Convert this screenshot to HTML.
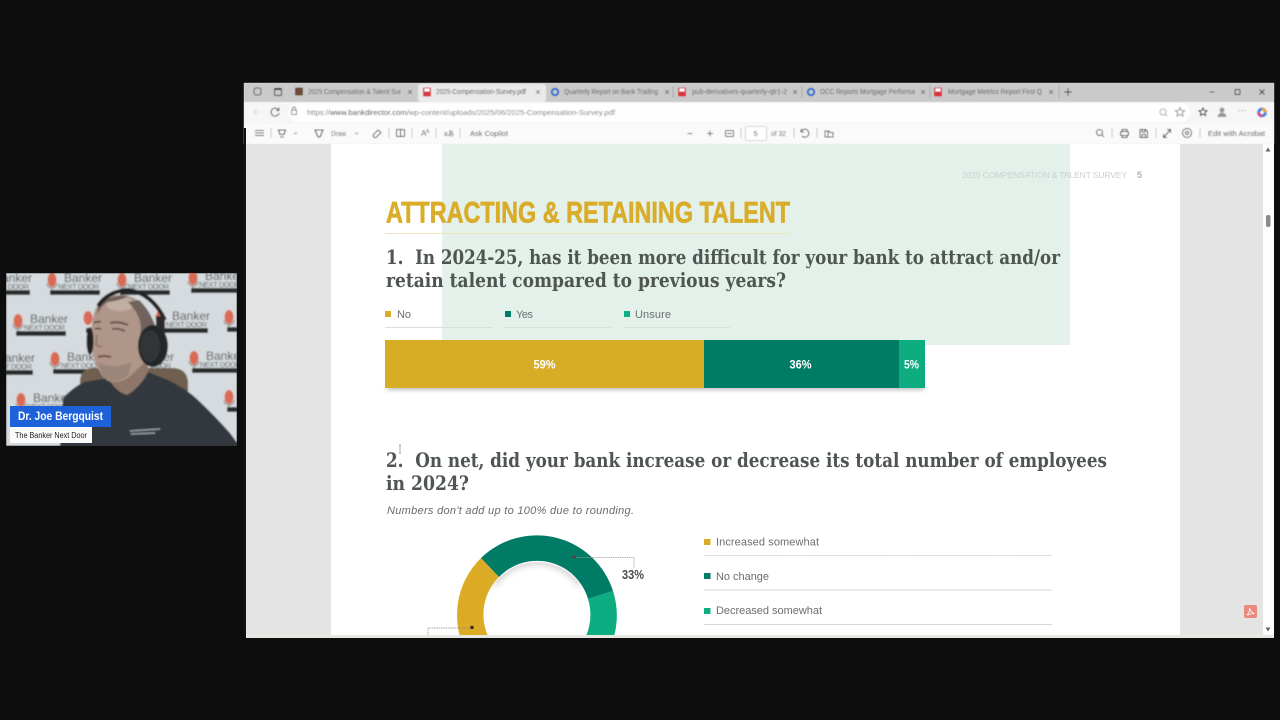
<!DOCTYPE html>
<html><head><meta charset="utf-8"><title>2025 Compensation Survey</title>
<style>
html,body{margin:0;padding:0;background:#0d0d0d;width:1280px;height:720px;overflow:hidden}
svg{display:block}
text{font-family:"Liberation Sans",sans-serif}
.ui{font-size:7.5px;fill:#5a5a5a}
.ic{fill:none;stroke:#555;stroke-width:1}
.sep{stroke:#c8c8c8;stroke-width:1}
.x{font-size:9px;fill:#444;text-anchor:middle}
text.q{font-family:"DejaVu Serif","Liberation Serif",serif;font-weight:bold;font-size:20px;fill:#4f5451}
.lg{font-size:11px;fill:#6e6e6e}
.pc{font-weight:bold;font-size:12px;fill:#fff;text-anchor:middle}
.bk{font-size:12px;fill:#4a4d50}
.nd{font-size:7.5px;fill:#5a5d60}
</style></head><body>
<svg width="1280" height="720" viewBox="0 0 1280 720" xmlns="http://www.w3.org/2000/svg">
<defs>
<filter id="b1" x="-5%" y="-5%" width="110%" height="110%"><feGaussianBlur stdDeviation="0.35"/></filter>
<filter id="b0" x="-5%" y="-5%" width="110%" height="110%"><feGaussianBlur stdDeviation="0.5"/></filter>
<filter id="b2" x="-5%" y="-5%" width="110%" height="110%"><feGaussianBlur stdDeviation="0.8"/></filter>
<filter id="b3" x="-20%" y="-50%" width="140%" height="200%"><feGaussianBlur stdDeviation="2.2"/></filter>
<filter id="b4" x="-30%" y="-60%" width="160%" height="220%"><feGaussianBlur stdDeviation="3.5"/></filter>
<clipPath id="cam"><rect x="6" y="273" width="231" height="173"/></clipPath>
<clipPath id="pg"><rect x="331" y="144" width="849" height="491"/></clipPath>
<clipPath id="inner"><circle cx="537" cy="615" r="53"/></clipPath>
</defs>
<rect width="1280" height="720" fill="#0d0d0d"/>

<!-- browser window -->
<rect x="244" y="83" width="1030" height="555" fill="#e8e8e2"/>
<g filter="url(#b0)">
<rect x="244" y="83" width="1030" height="19" fill="#cacaca"/>
<rect x="418" y="84" width="128" height="18" rx="3" fill="#eaeaea"/>
<rect x="244" y="102" width="1030" height="22" fill="#f6f6f6"/>
<rect x="288" y="103" width="902" height="19" rx="9" fill="#fefefe"/>
<rect x="244" y="124" width="1030" height="20" fill="#fafafa"/>

<!-- tab strip -->
<rect class="ic" x="254" y="88" width="7" height="7" rx="2"/>
<rect x="274.500" y="88.500" width="7" height="7" rx="1" fill="none" stroke="#333"/><rect x="275" y="88" width="6" height="2" fill="#333"/>
<line class="sep" x1="290" y1="86" x2="290" y2="98" stroke="#999"/>
<rect x="295" y="87.500" width="8" height="8" rx="1" fill="#6e4a35"/>
<text class="ui" x="308" y="94" textLength="93" lengthAdjust="spacingAndGlyphs">2025 Compensation &amp; Talent Sur</text>
<text class="x" x="410" y="95">×</text>
<rect x="423" y="87.500" width="8" height="9" rx="1" fill="#d8343c"/><rect x="424.500" y="88.500" width="5" height="3" fill="#fff"/>
<text class="ui" x="436" y="94" textLength="90" lengthAdjust="spacingAndGlyphs" style="fill:#444">2025-Compensation-Survey.pdf</text>
<text class="x" x="538" y="95">×</text>
<circle cx="555" cy="92" r="3.200" fill="none" stroke="#1f6fd0" stroke-width="2"/>
<text class="ui" x="564" y="94" textLength="94" lengthAdjust="spacingAndGlyphs">Quarterly Report on Bank Trading</text>
<text class="x" x="667" y="95">×</text>
<line class="sep" x1="673" y1="86" x2="673" y2="98" style="stroke:#aaa"/>
<rect x="678" y="87.500" width="8" height="9" rx="1" fill="#d8343c"/><rect x="679.500" y="88.500" width="5" height="3" fill="#fff"/>
<text class="ui" x="692" y="94" textLength="95" lengthAdjust="spacingAndGlyphs">pub-derivatives-quarterly-qtr1-2</text>
<text class="x" x="795" y="95">×</text>
<line class="sep" x1="802" y1="86" x2="802" y2="98" style="stroke:#aaa"/>
<circle cx="811" cy="92" r="3.200" fill="none" stroke="#1f6fd0" stroke-width="2"/>
<text class="ui" x="820" y="94" textLength="95" lengthAdjust="spacingAndGlyphs">OCC Reports Mortgage Performa</text>
<text class="x" x="923" y="95">×</text>
<line class="sep" x1="930" y1="86" x2="930" y2="98" style="stroke:#aaa"/>
<rect x="934" y="87.500" width="8" height="9" rx="1" fill="#d8343c"/><rect x="935.500" y="88.500" width="5" height="3" fill="#fff"/>
<text class="ui" x="948" y="94" textLength="94" lengthAdjust="spacingAndGlyphs">Mortgage Metrics Report First Q</text>
<text class="x" x="1051" y="95">×</text>
<line class="sep" x1="1059" y1="86" x2="1059" y2="98" style="stroke:#aaa"/>
<path d="M1068 88v8M1064 92h8" stroke="#333" fill="none"/>
<path d="M1209.500 92h5" stroke="#555" fill="none"/>
<rect x="1235" y="89.500" width="5" height="5" rx="1" fill="none" stroke="#333"/>
<path d="M1259.500 89.500l5 5M1264.500 89.500l-5 5" stroke="#333" fill="none"/>

<!-- address bar -->
<path d="M257 109l-3 3 3 3M254 112h6" stroke="#ddd" fill="none"/>
<path d="M278.500 110a4 4 0 1 0 .5 3M279 107.500v3h-3" class="ic" stroke="#444"/>
<rect x="291.500" y="110" width="5" height="4.500" class="ic" style="stroke:#888"/><path d="M292.500 110v-1.500a1.500 1.500 0 0 1 3 0V110" class="ic" style="stroke:#888"/>
<text x="307" y="115" font-size="7.500" textLength="308" lengthAdjust="spacingAndGlyphs" fill="#777">https://<tspan fill="#333">www.bankdirector.com</tspan>/wp-content/uploads/2025/06/2025-Compensation-Survey.pdf</text>
<circle cx="1163" cy="112" r="3" class="ic" style="stroke:#aaa"/><path d="M1165 114l2 2" class="ic" style="stroke:#aaa"/>
<path d="M1180 107.500l1.400 3 3.300.3-2.500 2.100.8 3.200-3-1.700-3 1.700.8-3.200-2.500-2.100 3.300-.3z" class="ic" style="stroke:#999"/>
<path d="M1203 108l1.200 2.500 2.800.3-2 1.800.6 2.800-2.600-1.400-2.600 1.400.6-2.800-2-1.800 2.800-.3z" class="ic" style="stroke:#333"/>
<circle cx="1222" cy="110" r="2.500" fill="#9a9a9a"/><path d="M1217.500 117a4.500 4.500 0 0 1 9 0z" fill="#9a9a9a"/>
<text x="1242" y="113" font-size="9" fill="#555" text-anchor="middle">···</text>
<circle cx="1262" cy="112.500" r="5" fill="#3a8de0"/><path d="M1262 107.500a5 5 0 0 1 5 5h-5z" fill="#e8a33c"/><path d="M1257 112.500a5 5 0 0 0 5 5v-5z" fill="#d9488a"/><circle cx="1262" cy="112.500" r="1.600" fill="#fff"/>

<!-- pdf toolbar -->
<path d="M255 130.500h9M255 133h9M255 135.500h9" class="ic"/>
<line class="sep" x1="271" y1="128" x2="271" y2="138"/>
<path d="M278.500 130h7l-1.500 4.500h-4zM280 137h4" class="ic" style="stroke:#333"/>
<path d="M294 132.500l1.500 1.500 1.500-1.500" class="ic" style="stroke:#aaa"/>
<path d="M315 130l8 0-3 7h-2z" class="ic" style="stroke:#333"/>
<text class="ui" x="331" y="136" textLength="15" lengthAdjust="spacingAndGlyphs">Draw</text>
<path d="M355 132.500l1.500 1.500 1.500-1.500" class="ic" style="stroke:#aaa"/>
<path d="M373 135l5-5 3 2.500-5 5h-2z" class="ic"/>
<line class="sep" x1="389" y1="128" x2="389" y2="138"/>
<rect x="396.500" y="129.500" width="8" height="7" rx="1" class="ic" style="stroke:#333"/><path d="M400.500 129.500v7" class="ic" style="stroke:#333"/>
<line class="sep" x1="412" y1="128" x2="412" y2="138"/>
<text x="421" y="136" font-size="8" fill="#555">A</text><text x="426" y="133" font-size="5" fill="#555">A</text>
<line class="sep" x1="436" y1="128" x2="436" y2="138"/>
<text x="444" y="136" font-size="7.500" fill="#444" textLength="10" lengthAdjust="spacingAndGlyphs" style="font-family:'Liberation Sans','Noto Sans CJK JP',sans-serif">aあ</text>
<line class="sep" x1="460" y1="128" x2="460" y2="138"/>
<text class="ui" x="470" y="136" textLength="38" lengthAdjust="spacingAndGlyphs" style="fill:#444">Ask Copilot</text>
<path d="M687.500 133.500h5M707 133.500h6M710 130.500v6" class="ic" style="stroke:#666"/>
<rect x="725.500" y="130.500" width="8" height="6" rx="1" class="ic"/><path d="M727 133.500h5" class="ic" stroke-width="0.800"/>
<line class="sep" x1="741" y1="128" x2="741" y2="138"/>
<rect x="745.500" y="126.500" width="21" height="14" rx="1.500" fill="#fff" stroke="#d4d4d4"/>
<text class="ui" x="753.500" y="136" style="fill:#444">5</text>
<text class="ui" x="771" y="136" textLength="15" lengthAdjust="spacingAndGlyphs">of 32</text>
<line class="sep" x1="794" y1="128" x2="794" y2="138"/>
<path d="M801.500 131a4 4 0 1 1 .5 5M801 129v3h3" class="ic" style="stroke:#444"/>
<line class="sep" x1="817" y1="128" x2="817" y2="138"/>
<path d="M825 131h4l1 1.500h3v4.500h-8zM828 131v6" class="ic"/>
<circle cx="1099.500" cy="132.500" r="3" class="ic"/><path d="M1102 135l2 2" class="ic"/>
<line class="sep" x1="1112" y1="128" x2="1112" y2="138"/>
<rect x="1120.500" y="131.500" width="8" height="4" rx="1.500" class="ic" style="stroke:#333"/><path d="M1122 131.500v-2h5v2M1122 135.500v2h5v-2" class="ic" style="stroke:#333"/>
<path d="M1140 129.500h5.500l2 2v6h-7.500z" class="ic" style="stroke:#333"/><path d="M1142 129.500v2.500h3v-2.500M1142 137.500v-3h3.500v3" class="ic" style="stroke:#333" stroke-width="0.700"/>
<line class="sep" x1="1156" y1="128" x2="1156" y2="138"/>
<path d="M1163.500 137.500l7-8M1167 129.500h3.500V133M1163.500 134v3.500h3.500" class="ic" style="stroke:#444"/>
<circle cx="1187" cy="133" r="4.500" class="ic"/><circle cx="1187" cy="133" r="1.500" class="ic"/>
<line class="sep" x1="1200" y1="128" x2="1200" y2="138"/>
<text class="ui" x="1208" y="136" textLength="57" lengthAdjust="spacingAndGlyphs" style="fill:#444">Edit with Acrobat</text>
</g>

<!-- viewer -->
<rect x="246" y="144" width="1017" height="491" fill="#e4e4e4"/>
<rect x="244" y="128" width="2" height="510" fill="#111"/>
<rect x="1263" y="144" width="11" height="491" fill="#fdfdfd"/>
<rect x="331" y="144" width="849" height="491" fill="#fff"/>
<rect x="442" y="144" width="628" height="201" fill="#e3f1ea"/>
<path d="M1268 147.500l2.500 4h-5zM1268 631.500l2.500-4h-5z" fill="#666"/>
<rect x="1266" y="215" width="4.500" height="12" rx="2" fill="#8a8a8a"/>
<rect x="1244" y="605" width="13" height="13" rx="2" fill="#e88a80"/>
<path d="M1247 615c2-2 3-5 2.500-7 1 3 2.500 5 5 5.500-3 0-5 .5-7.500 1.500z" fill="none" stroke="#fff" stroke-width="0.800"/>

<g clip-path="url(#pg)" filter="url(#b1)">
<text x="962" y="178" font-size="8.500" fill="#ccd0ce" textLength="165" lengthAdjust="spacing">2025 COMPENSATION &amp; TALENT SURVEY</text>
<text x="1137" y="178" font-size="9" font-weight="bold" fill="#aeb2b0">5</text>

<text x="386" y="222.500" font-weight="bold" font-size="30" fill="#d9ad2b" stroke="#d9ad2b" stroke-width="0.700" textLength="404" lengthAdjust="spacingAndGlyphs">ATTRACTING &amp; RETAINING TALENT</text>
<line x1="385" y1="233.500" x2="790" y2="233.500" stroke="#efe6bf" stroke-width="1"/>

<text class="q" x="386" y="264" textLength="674" lengthAdjust="spacingAndGlyphs" xml:space="preserve">1.  In 2024-25, has it been more difficult for your bank to attract and/or</text>
<text class="q" x="386" y="287" textLength="400" lengthAdjust="spacingAndGlyphs">retain talent compared to previous years?</text>

<rect x="385" y="311" width="6" height="6" fill="#d9ad2b"/>
<text class="lg" x="397" y="318" textLength="14" lengthAdjust="spacing">No</text>
<rect x="505" y="311" width="6" height="6" fill="#037c66"/>
<text class="lg" x="516" y="318" textLength="17" lengthAdjust="spacing">Yes</text>
<rect x="624" y="311" width="6" height="6" fill="#0fae84"/>
<text class="lg" x="635" y="318" textLength="36" lengthAdjust="spacing">Unsure</text>
<path d="M385 327.500h107M504 327.500h107M623 327.500h107" stroke="#dadfdc"/>

<rect x="387" y="384" width="537" height="6" fill="#8a8a8a" opacity=".55" filter="url(#b3)"/>
<rect x="385" y="340" width="319" height="48" fill="#d8ad27"/>
<rect x="704" y="340" width="195" height="48" fill="#037c66"/>
<rect x="899" y="340" width="26" height="48" fill="#0cac81"/>
<text class="pc" x="544.500" y="368.500" textLength="22" lengthAdjust="spacingAndGlyphs">59%</text>
<text class="pc" x="800.500" y="368.500" textLength="22" lengthAdjust="spacingAndGlyphs">36%</text>
<text class="pc" x="911.500" y="368.500" textLength="15" lengthAdjust="spacingAndGlyphs">5%</text>

<path d="M400 445v8M399 445h2M399 453h2" stroke="#888" stroke-width="0.700" fill="none"/>

<text class="q" x="386" y="467" textLength="721" lengthAdjust="spacingAndGlyphs" xml:space="preserve">2.  On net, did your bank increase or decrease its total number of employees</text>
<text class="q" x="386" y="490" textLength="83" lengthAdjust="spacingAndGlyphs">in 2024?</text>
<text x="387" y="514" font-size="11" font-style="italic" fill="#6a6a6a" textLength="247" lengthAdjust="spacing">Numbers don't add up to 100% due to rounding.</text>

<rect x="704" y="539" width="6.500" height="6" fill="#d9ad2b"/>
<text class="lg" x="716" y="545.500" textLength="103" lengthAdjust="spacing">Increased somewhat</text>
<path d="M704 555.500h348" stroke="#d6d8d6" stroke-dasharray="2 .6"/>
<rect x="704" y="573" width="6.500" height="6" fill="#037c66"/>
<text class="lg" x="716" y="580" textLength="53" lengthAdjust="spacing">No change</text>
<path d="M704 590h348" stroke="#d6d8d6"/>
<rect x="704" y="608" width="6.500" height="6" fill="#0fae84"/>
<text class="lg" x="716" y="614" textLength="106" lengthAdjust="spacing">Decreased somewhat</text>
<path d="M704 624.500h348" stroke="#d6d8d6"/>

<g clip-path="url(#inner)"><path d="M493 585A53 53 0 0 1 581 585" fill="none" stroke="#c6c6c6" stroke-width="5" filter="url(#b4)"/></g>
<path d="M481 558A80 80 0 0 0 465 650L497 650A53 53 0 0 1 499 577Z" fill="#dcab27"/>
<path d="M481 558A80 80 0 0 1 613 591L588 599A53 53 0 0 0 499 577Z" fill="#037c66"/>
<path d="M613 591A80 80 0 0 1 609 650L577 650A53 53 0 0 0 588 599Z" fill="#0cac81"/>
<circle cx="574" cy="557" r="1.800" fill="#4a4a4a"/>
<path d="M576 557.500h58v10" fill="none" stroke="#9a9a9a" stroke-width="0.800" stroke-dasharray="1.500 .8"/>
<text x="622" y="579" font-weight="bold" font-size="12.500" fill="#4a4d4c" textLength="22" lengthAdjust="spacingAndGlyphs">33%</text>
<circle cx="472" cy="627.500" r="1.800" fill="#333"/>
<path d="M470 628h-42v7" fill="none" stroke="#8a8a8a" stroke-width="0.800" stroke-dasharray="1.500 .8"/>
</g>

<!-- webcam -->
<g clip-path="url(#cam)">
<g filter="url(#b2)">
<rect x="6" y="273" width="231" height="173" fill="#d6dbdf"/>

<g transform="translate(52 280)"><ellipse rx="4.500" ry="7" fill="#d96a55"/><path d="M-5 3a5 5 0 0 0 10 0M0 8v2" fill="none" stroke="#888"/><text class="bk" x="12" y="2">Banker</text><text class="nd" x="6" y="9" textLength="41">NEXT DOOR</text><rect x="-2" y="10" width="50" height="5" fill="#2a2a2a"/></g>
<g transform="translate(122 280)"><ellipse rx="4.500" ry="7" fill="#d96a55"/><path d="M-5 3a5 5 0 0 0 10 0M0 8v2" fill="none" stroke="#888"/><text class="bk" x="12" y="2">Banker</text><text class="nd" x="6" y="9" textLength="41">NEXT DOOR</text><rect x="-2" y="10" width="50" height="5" fill="#2a2a2a"/></g>
<g transform="translate(193 278)"><ellipse rx="4.500" ry="7" fill="#d96a55"/><path d="M-5 3a5 5 0 0 0 10 0M0 8v2" fill="none" stroke="#888"/><text class="bk" x="12" y="2">Banker</text><text class="nd" x="6" y="9" textLength="41">NEXT DOOR</text><rect x="-2" y="10" width="50" height="5" fill="#2a2a2a"/></g>
<g transform="translate(-18 280)"><text class="bk" x="12" y="2">Banker</text><text class="nd" x="6" y="9" textLength="41">NEXT DOOR</text><rect x="-2" y="10" width="50" height="5" fill="#2a2a2a"/></g>

<g transform="translate(18 321)"><ellipse rx="4.500" ry="7" fill="#d96a55"/><path d="M-5 3a5 5 0 0 0 10 0M0 8v2" fill="none" stroke="#888"/><text class="bk" x="12" y="2">Banker</text><text class="nd" x="6" y="9" textLength="41">NEXT DOOR</text><rect x="-2" y="10" width="50" height="5" fill="#2a2a2a"/></g>
<g transform="translate(88 318)"><ellipse rx="4.500" ry="7" fill="#d96a55"/><rect x="-2" y="10" width="10" height="5" fill="#2a2a2a"/></g>
<g transform="translate(160 318)"><ellipse rx="4.500" ry="7" fill="#d96a55"/><text class="bk" x="12" y="2">Banker</text><text class="nd" x="6" y="9" textLength="41">NEXT DOOR</text><rect x="-2" y="10" width="50" height="5" fill="#2a2a2a"/></g>
<g transform="translate(229 317)"><ellipse rx="4.500" ry="7" fill="#d96a55"/><path d="M-5 3a5 5 0 0 0 10 0M0 8v2" fill="none" stroke="#888"/><rect x="-2" y="10" width="50" height="5" fill="#2a2a2a"/></g>

<g transform="translate(-15 360)"><text class="bk" x="12" y="2">Banker</text><text class="nd" x="6" y="9" textLength="41">NEXT DOOR</text><rect x="-2" y="10" width="50" height="5" fill="#2a2a2a"/></g>
<g transform="translate(55 359)"><ellipse rx="4.500" ry="7" fill="#d96a55"/><path d="M-5 3a5 5 0 0 0 10 0M0 8v2" fill="none" stroke="#888"/><text class="bk" x="12" y="2">Banker</text><text class="nd" x="6" y="9" textLength="41">NEXT DOOR</text><rect x="-2" y="10" width="50" height="5" fill="#2a2a2a"/></g>
<g transform="translate(124 359)"><text class="bk" x="12" y="2">Banker</text><text class="nd" x="6" y="9" textLength="41">NEXT DOOR</text><rect x="-2" y="10" width="50" height="5" fill="#2a2a2a"/></g>
<g transform="translate(194 358)"><ellipse rx="4.500" ry="7" fill="#d96a55"/><path d="M-5 3a5 5 0 0 0 10 0M0 8v2" fill="none" stroke="#888"/><text class="bk" x="12" y="2">Banker</text><text class="nd" x="6" y="9" textLength="41">NEXT DOOR</text><rect x="-2" y="10" width="50" height="5" fill="#2a2a2a"/></g>

<g transform="translate(21 400)"><ellipse rx="4.500" ry="7" fill="#d96a55"/><path d="M-5 3a5 5 0 0 0 10 0M0 8v2" fill="none" stroke="#888"/><text class="bk" x="12" y="2">Banker</text><text class="nd" x="6" y="9" textLength="41">NEXT DOOR</text><rect x="-2" y="10" width="50" height="5" fill="#2a2a2a"/></g>
<g transform="translate(229 397)"><ellipse rx="4.500" ry="7" fill="#d96a55"/><path d="M-5 3a5 5 0 0 0 10 0M0 8v2" fill="none" stroke="#888"/><rect x="-2" y="10" width="50" height="5" fill="#2a2a2a"/></g>

<!-- chair -->
<path d="M80 380q1-11 12-12h82q13 1 14 14v14H80z" fill="#6f5f50"/>
<!-- neck -->
<path d="M100 372L106 384L127 397L148 376L148 350L110 355Z" fill="#8f7669"/>
<!-- shirt -->
<path d="M60 447L63 398Q72 388 84 382L108 378Q116 392 127 395Q140 388 148 372L168 380Q188 390 198 400Q214 415 230 433L238 444V447Z" fill="#33393e"/>
<path d="M130 431l30-2M131 434l24-1" stroke="#b9bec0" stroke-width="1"/>
<!-- head -->
<path d="M91 335Q92 312 98 305Q106 294 122 295Q142 296 150 318L150 345Q147 360 141 366L128 378Q118 384 108 381Q100 375 95 362Q91 350 91 335Z" fill="#b09689"/>
<ellipse cx="120" cy="304" rx="14" ry="7" fill="#c6b4aa" opacity=".8"/>
<path d="M139 300Q150 310 156 328L140 335Q144 318 128 302Z" fill="#6f625c"/>
<path d="M98 305Q110 294 128 296Q122 300 108 302Q100 306 97 316Z" fill="#6b5f5a"/>
<path d="M94 323q3-2 7-1M110 323q9-2 18 2" stroke="#5e4c45" stroke-width="1.800" fill="none"/>
<path d="M95 329q3-1 6 0M112 329q6-1 13 2" stroke="#4e403c" stroke-width="1.600" fill="none"/>
<path d="M97 335l-1 10q2 2 6 1" stroke="#8a6e62" stroke-width="1.500" fill="none"/>
<path d="M98 357q6-2 13 0" stroke="#6d4a44" stroke-width="2" fill="none"/>
<path d="M98 362q14 8 34 0l-4 14q-12 8-21 4q-6-5-9-18z" fill="#8d7a6e" opacity=".55"/>
<!-- headphones -->
<path d="M98 306Q108 291 128 290Q152 293 165 320" fill="none" stroke="#222" stroke-width="4"/>
<ellipse cx="153" cy="346" rx="15" ry="21" fill="#232526"/>
<ellipse cx="150" cy="346" rx="10" ry="16" fill="#323437"/>
<rect x="156" y="316" width="9" height="13" fill="#2a2a2a" rx="2"/>
<ellipse cx="90" cy="341" rx="3.500" ry="14" fill="#222"/>
</g>
<rect x="10" y="406" width="101" height="21" fill="#1e62d9"/>
<rect x="10" y="427" width="82" height="16" fill="#fbfbfb"/>
<text x="18" y="420" font-weight="bold" font-size="12" fill="#fff" textLength="85" lengthAdjust="spacingAndGlyphs">Dr. Joe Bergquist</text>
<text x="15" y="438" font-size="8" fill="#222" textLength="72" lengthAdjust="spacingAndGlyphs">The Banker Next Door</text>
</g>
</svg>
</body></html>
